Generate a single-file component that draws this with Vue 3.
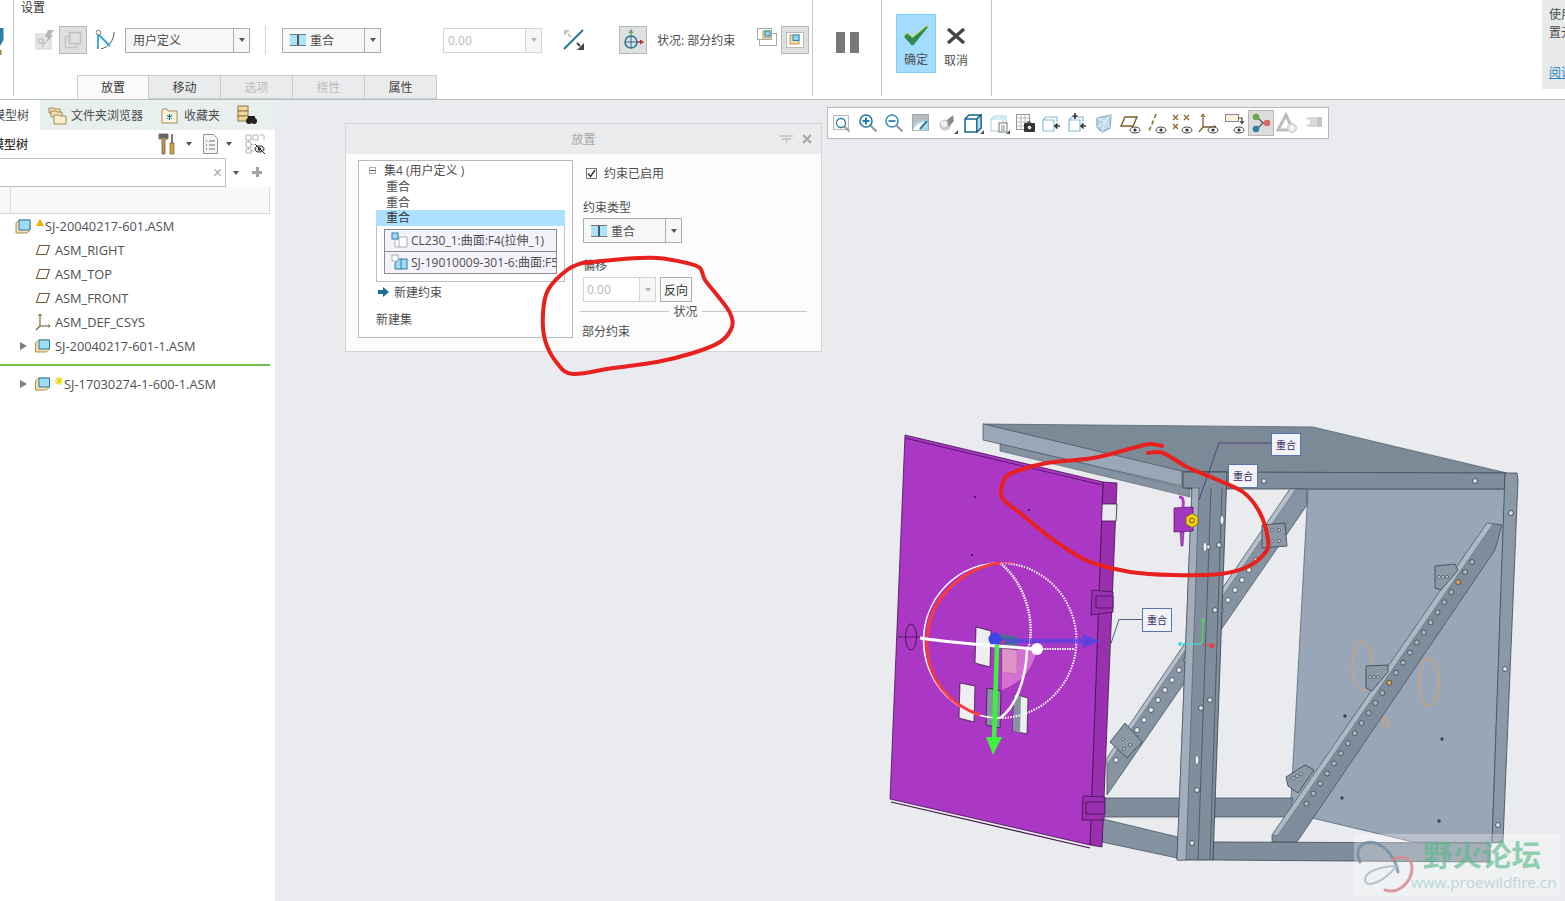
<script setup>
// smooth line through hand-picked points, for the red marker strokes
function smooth(pts) {
  let d = `M${pts[0][0]},${pts[0][1]}`
  for (let i = 0; i < pts.length - 1; i++) {
    const p0 = pts[i - 1] || pts[i]
    const p1 = pts[i]
    const p2 = pts[i + 1]
    const p3 = pts[i + 2] || p2
    const c1 = [p1[0] + (p2[0] - p0[0]) / 6, p1[1] + (p2[1] - p0[1]) / 6]
    const c2 = [p2[0] - (p3[0] - p1[0]) / 6, p2[1] - (p3[1] - p1[1]) / 6]
    d += ` C${c1[0].toFixed(1)},${c1[1].toFixed(1)} ${c2[0].toFixed(1)},${c2[1].toFixed(1)} ${p2[0]},${p2[1]}`
  }
  return d
}

const dialogMark = smooth([
  [585, 263], [623, 259], [657, 258], [687, 263], [700, 268], [705, 280], [717, 295], [730, 313],
  [732, 327], [720, 342], [693, 353], [657, 362], [613, 368], [573, 374], [557, 363], [545, 340],
  [543, 313], [548, 290], [567, 270], [585, 262],
])
const modelMark = smooth([
  [1162, 446], [1150, 444], [1133, 448], [1093, 458], [1047, 463], [1020, 470], [1005, 478], [1002, 497],
  [1020, 513], [1047, 535], [1073, 553], [1093, 563], [1130, 572], [1173, 575], [1220, 574], [1247, 567],
  [1265, 553], [1268, 540], [1260, 513], [1243, 492], [1213, 478], [1187, 467], [1163, 453], [1148, 453],
])

const upperHoles = Array.from({ length: 21 }, (_, i) => ({ x: 1256 - 7 * i, y: 560 + 10 * i }))
const lowerHoles = Array.from({ length: 25 }, (_, i) => ({ x: 1472 - 6.9 * i, y: 562 + 10.07 * i }))
const doorDots = [[975, 497], [1029, 510], [972, 555], [1026, 568]]
const sheetDots = [[1345, 716], [1442, 739], [1342, 798], [1439, 821]]
const frameHoles = [[1511, 513], [1505, 669], [1498, 825], [1264, 481], [1475, 481], [1208, 547], [1201, 708], [1197, 790], [1192, 843], [1219, 545], [1215, 610], [1210, 700]]
const slotHoles = [[1205, 547], [1197, 760], [1222, 520]]
const brackets = [
  'M1435,566 L1455,564 L1458,570 L1441,590 L1435,588 Z',
  'M1366,666 L1388,665 L1388,672 L1372,691 L1366,688 Z',
  'M1286,777 L1305,765 L1314,770 L1298,793 L1288,786 Z',
  'M1262,525 L1285,523 L1287,546 L1262,548 Z',
  'M1110,742 L1125,723 L1142,742 L1127,758 Z',
]
const bracketDots = [
  [1439, 577], [1443, 577], [1447, 577],
  [1370, 677], [1374, 677], [1378, 677],
  [1293, 778], [1297, 776], [1301, 774],
  [1272, 530], [1279, 530], [1279, 541], [1272, 541],
  [1123, 739], [1130, 745], [1124, 749],
]

const tags = [
  { x: 1142, y: 608, w: 29, h: 23 },
  { x: 1271, y: 433, w: 29, h: 22 },
  { x: 1228, y: 464, w: 29, h: 23 },
]

const eye = '<ellipse cx="16" cy="18" rx="5" ry="3" fill="#fff" stroke="#444"/><circle cx="16" cy="18" r="1.6" fill="#333"/>'
const corner = '<path d="M22 22h-4l4-4z" fill="#555"/>'
const viewIcons = [
  '<rect x="2.5" y="3.5" width="15" height="14" fill="#f6f8f8" stroke="#b3bbc0"/><circle cx="10" cy="11" r="4.5" fill="#fff" stroke="#2f7f9f" stroke-width="1.3"/><path d="M13.5 14.5l5 5" stroke="#999" stroke-width="2"/>',
  '<circle cx="9" cy="9" r="6" fill="#fff" stroke="#1f7a9e" stroke-width="1.6"/><path d="M5.5 9h7M9 5.5v7" stroke="#1f7a9e" stroke-width="2"/><path d="M13.5 13.5l6 6" stroke="#999" stroke-width="2.2"/>',
  '<circle cx="9" cy="9" r="6" fill="#fff" stroke="#3f92b2" stroke-width="1.6"/><path d="M5.5 9h7" stroke="#3f92b2" stroke-width="2"/><path d="M13.5 13.5l6 6" stroke="#999" stroke-width="2.2"/>',
  '<rect x="2.5" y="2.5" width="16" height="16" fill="#b9bcbe" stroke="#a3a7aa"/><path d="M3 18.5v-6c4-4 9-5 15-4v10z" fill="#a9d7e8"/><path d="M3 18c3-6 8-8 12-8-3 2-5 5-6 8z" fill="#fff"/><path d="M10 17l7-8" stroke="#1b6f93" stroke-width="1.6"/>',
  '<circle cx="9" cy="13" r="5.5" fill="#c9c9c9"/><circle cx="8" cy="12" r="3" fill="#f1f1f1"/><path d="M11 8l6-5 1 6-5 6z" fill="#8d8d8d"/>' + corner,
  '<path d="M3 7h12v13H3zM3 7l4-4h12v13l-4 4M15 7l4-4" fill="#fff" stroke="#17658a" stroke-width="1.5"/><path d="M15 7l4-4v13l-4 4z" fill="#bfe3f2" stroke="#17658a" stroke-width="1.2"/>' + corner,
  '<path d="M3 7h12v12H3zM3 7l3-3h12v7" fill="#fff" stroke="#9fcfe3"/><path d="M6 4h12v4H6z" fill="#d4edf7"/><rect x="11" y="11" width="8" height="9" fill="#fff" stroke="#777"/><path d="M13 14h4M13 16h4M13 18h4" stroke="#888"/>' + corner,
  '<rect x="2.5" y="2.5" width="13" height="15" fill="#fff" stroke="#999"/><path d="M3 6h12M3 10h12M3 14h12M7 3v14M11 3v14" stroke="#bbb"/><rect x="10" y="11" width="11" height="9" rx="1" fill="#333"/><rect x="13" y="9.5" width="4" height="2" fill="#555"/><circle cx="15.5" cy="15.5" r="2.5" fill="#ddd" stroke="#111"/>',
  '<path d="M3 8h11v11H3zM3 8l3-3h11v5" fill="#fff" stroke="#85bdd6" stroke-width="1.2"/><path d="M20 14h-5M17.5 11.5L15 14l2.5 2.5" fill="none" stroke="#333" stroke-width="1.6"/>',
  '<path d="M3 8h11v11H3zM3 8l3-3h11v5" fill="#fff" stroke="#85bdd6" stroke-width="1.2"/><path d="M20 14h-5M17.5 11.5L15 14l2.5 2.5M9 1v6M6.5 4h5" fill="none" stroke="#333" stroke-width="1.6"/>',
  '<path d="M4 6l14-3-1 13-8 4-5-5z" fill="#bcdbe8" stroke="#86aabb" stroke-width="1.2"/><path d="M4 6l8 3 6-6M12 9l-3 11M4 15l9-6 4 7" fill="none" stroke="#e5f2f7"/>',
  '<path d="M2 14l4-9h12l-4 9z" fill="none" stroke="#7d5c24" stroke-width="1.4"/>' + eye,
  '<path d="M11 2l-1.6 4M8.4 8.5l-1.5 4M5.8 14.5l-1.5 4" stroke="#8a6a2a" stroke-width="1.6"/>' + eye,
  '<path d="M2 3l5 5M7 3l-5 5M13 3l5 5M18 3l-5 5M2 12l5 5M7 12l-5 5" stroke="#8a6a2a" stroke-width="1.3"/>' + eye,
  '<path d="M6 2v13H19M6 15l-4 5" fill="none" stroke="#7d5c24" stroke-width="1.3"/><path d="M4 5l2-3 2 3M17 13l2 2-2 2" fill="none" stroke="#7d5c24"/>' + eye,
  '<rect x="2.5" y="2.5" width="13" height="7" fill="#fbf3d8" stroke="#888"/><path d="M15 6h4v5M17 9l2 2.500 2-2.500" fill="none" stroke="#444" stroke-width="1.2"/>' + eye,
  '<path d="M7 5l6 6-6 6M13 11h4" fill="none" stroke="#555" stroke-width="1.3"/><circle cx="6" cy="5" r="3.300" fill="#6aa84f"/><circle cx="6" cy="17" r="3.300" fill="#2e7fa8"/><circle cx="17" cy="11" r="3.300" fill="#d9666f"/>',
  '<path d="M10 3L2 18h15z" fill="none" stroke="#bcbcbc" stroke-width="3"/><circle cx="16" cy="16" r="4.500" fill="#e4e4e4" stroke="#c8c8c8"/><path d="M14.500 13.500l4 2.500-4 2.500z" fill="#fff"/>',
  '<path d="M3 7l4-2h13v10H7l-4-2z" fill="#d8d8d8"/><path d="M3 7l5 1v4l-5 1z" fill="#fff"/><path d="M15 5h5v10h-5z" fill="#c4c4c4"/>',
]
const pressedView = 16

const treeRows = [
  { label: 'ASM_RIGHT', kind: 'plane' },
  { label: 'ASM_TOP', kind: 'plane' },
  { label: 'ASM_FRONT', kind: 'plane' },
  { label: 'ASM_DEF_CSYS', kind: 'csys' },
]
const ribbonTabs = [
  { label: '放置', active: true },
  { label: '移动' },
  { label: '选项', off: true },
  { label: '挠性', off: true },
  { label: '属性' },
]
</script>

<template>
  <div class="app">
    <!-- ribbon -->
    <header class="ribbon">
      <div class="edge">
        <svg class="edge-icon" width="4" height="28" viewBox="0 0 4 28">
          <path d="M0 0h3.500v12L0 18z" fill="#2c7ea6" />
          <rect y="22" width="1.500" height="5" fill="#a8843d" />
        </svg>
      </div>
      <section class="group settings">
        <div class="group-title">设置</div>
        <div class="tools">
          <svg class="ic-greyed" width="20" height="22" viewBox="0 0 20 22">
            <rect x="1" y="5" width="15" height="15" fill="#e6e6e6" stroke="#cfcfcf" />
            <path d="M4 10h4v4H4zM10 13l-3 5" fill="none" stroke="#c4c4c4" stroke-width="1.500" />
            <path d="M13 1h6l-4 5h3l-7 8 2-6h-3z" fill="#b5b5b5" />
          </svg>
          <button class="press ic-copy">
            <svg width="20" height="20" viewBox="0 0 20 20">
              <rect x="6.500" y="2.500" width="11" height="11" fill="none" stroke="#bdbdbd" stroke-width="1.500" />
              <path d="M6 6.500H2.500v11h11V14" fill="none" stroke="#c4c4c4" stroke-width="1.500" />
            </svg>
          </button>
          <svg class="ic-fit" width="20" height="22" viewBox="0 0 20 22">
            <path d="M19 3c0 8-5 15-13 17" fill="none" stroke="#555" stroke-width="1" />
            <path d="M3 6v14M4 6l11 11" fill="none" stroke="#2ea5d8" stroke-width="1.800" />
            <circle cx="3.500" cy="3.500" r="2.300" fill="#fff" stroke="#8a7a5c" />
          </svg>
          <div class="combo combo-user">
            <span class="combo-text">用户定义</span>
            <span class="combo-btn"><i class="caret"></i></span>
          </div>
          <div class="tool-sep"></div>
          <div class="combo combo-mate">
            <span class="combo-text"><i class="mate-ic"></i>重合</span>
            <span class="combo-btn"><i class="caret"></i></span>
          </div>
          <div class="combo combo-value off">
            <span class="combo-text">0.00</span>
            <span class="combo-btn"><i class="caret"></i></span>
          </div>
          <svg class="ic-flip" width="22" height="22" viewBox="0 0 22 22">
            <path d="M20 1L1 20" stroke="#1f6f93" stroke-width="1.800" />
            <path d="M1 1h6L1 7z" fill="#c4c4c4" />
            <path d="M21 21h-7l7-7z" fill="#444" />
            <path d="M5 5l3 3" stroke="#c4c4c4" stroke-width="2" />
            <path d="M14 14l3 3" stroke="#444" stroke-width="2" />
          </svg>
          <button class="press ic-move">
            <svg width="24" height="24" viewBox="0 0 24 24">
              <circle cx="10" cy="14" r="6" fill="none" stroke="#1f6f93" stroke-width="1.400" />
              <path d="M4 14h12M10 8v12" stroke="#1f6f93" />
              <path d="M10 8V4" stroke="#6b9a5a" stroke-width="1.400" />
              <path d="M7.500 5L10 1l2.500 4z" fill="#6b9a5a" />
              <path d="M16 14h4" stroke="#a33" stroke-width="1.400" />
              <path d="M19 11.500l4 2.500-4 2.500z" fill="#a33" />
            </svg>
          </button>
          <span class="status-text">状况: 部分约束</span>
          <svg class="ic-win" width="20" height="18" viewBox="0 0 20 18">
            <rect x="2.500" y="5.500" width="17" height="12" fill="#fff" stroke="#aaa" />
            <rect x="0.500" y="0.500" width="14" height="11" fill="#fff" stroke="#aaa" />
            <rect x="6" y="3" width="7" height="7" fill="#f2d9a0" stroke="#b79b5e" />
            <rect x="8" y="3" width="5" height="5" fill="#8fd6f5" stroke="#2f8ab3" />
          </svg>
          <button class="press ic-win2">
            <svg width="18" height="16" viewBox="0 0 18 16">
              <rect x="0.500" y="0.500" width="17" height="15" fill="#fff" stroke="#bbb" />
              <rect x="4" y="3" width="9" height="9" fill="#f2d9a0" stroke="#b79b5e" />
              <rect x="7" y="3" width="6" height="5.500" fill="#8fd6f5" stroke="#2f8ab3" />
            </svg>
          </button>
        </div>
        <div class="ribbon-tabs">
          <div
            v-for="tab in ribbonTabs"
            :key="tab.label"
            class="ribbon-tab"
            :class="{ active: tab.active, off: tab.off }"
          >
            {{ tab.label }}
          </div>
        </div>
      </section>
      <section class="group pause">
        <i class="pause-bar"></i>
        <i class="pause-bar"></i>
      </section>
      <section class="group confirm">
        <div class="big-btn ok">
          <svg width="28" height="21" viewBox="0 0 30 24">
            <path d="M1 13l4-4 6 5L27 1l2 1-17 21h-2z" fill="#2f8a57" />
            <path d="M1 13l4-4 6 5L27 1l2 1" fill="none" stroke="#c9d84a" stroke-width="1.200" />
          </svg>
          <span>确定</span>
        </div>
        <div class="big-btn cancel">
          <svg width="20" height="16" viewBox="0 0 20 16">
            <path d="M2 1l16 14M18 1L2 15" stroke="#444" stroke-width="3.400" />
          </svg>
          <span>取消</span>
        </div>
      </section>
      <aside class="help">
        <div class="help-text">使用<br />置元</div>
        <div class="help-link">阅读</div>
      </aside>
    </header>

    <div class="workspace">
      <!-- model tree panel -->
      <aside class="side">
        <div class="side-tabs">
          <div class="side-tab active">模型树</div>
          <div class="side-tab folders">
            <svg width="19" height="19" viewBox="0 0 19 19">
              <path d="M1 7V2h5l1 1h5v4z" fill="#f1dfb6" stroke="#a68b55" />
              <path d="M3 11V5h5l1 1h5v5z" fill="#f1dfb6" stroke="#a68b55" />
              <path d="M6 18V9h5l1 1h6v8z" fill="#fbeecb" stroke="#a68b55" />
            </svg>
            文件夹浏览器
          </div>
          <div class="side-tab favs">
            <svg width="17" height="17" viewBox="0 0 17 17">
              <path d="M1 16V3l1-1h4l1 2h9v12z" fill="#fdf5dd" stroke="#a68b55" />
              <path d="M8.500 7v6M6 8.500l5 3M11 8.500l-5 3" stroke="#0f7096" stroke-width="1.100" />
            </svg>
            收藏夹
          </div>
          <svg class="find-ic" width="20" height="20" viewBox="0 0 20 20">
            <rect x="1" y="1" width="10" height="5" fill="#efd79d" stroke="#94773f" />
            <rect x="1" y="6" width="10" height="5" fill="#efd79d" stroke="#94773f" />
            <rect x="1" y="11" width="10" height="5" fill="#efd79d" stroke="#94773f" />
            <circle cx="12" cy="16" r="3" fill="#222" />
            <circle cx="17" cy="16" r="3" fill="#222" />
            <rect x="11" y="11" width="7" height="4" fill="#222" />
          </svg>
        </div>
        <div class="tree-bar">
          <span class="tree-bar-title">模型树</span>
          <div class="tree-bar-tools">
            <svg class="ic-tools" width="17" height="22" viewBox="0 0 17 22">
              <path d="M1 1h9v5H7v15H4V6H1z" fill="#b99a62" stroke="#6f5a31" stroke-width=".8" />
              <rect x="1" y="1" width="9" height="4" fill="#666" />
              <path d="M13 1h2v9h-2z" fill="#777" />
              <rect x="12" y="10" width="4" height="11" fill="#c9a24a" stroke="#7b6228" stroke-width=".7" />
            </svg>
            <i class="caret dark"></i>
            <svg class="ic-doc" width="15" height="20" viewBox="0 0 15 20">
              <path d="M.5.500h10l4 4v15H.5z" fill="#f4f6f6" stroke="#8b9296" />
              <path d="M6 7h6M6 11h6M6 15h6" stroke="#777" />
              <path d="M3 7h1M3 11h1M3 15h1" stroke="#777" stroke-width="1.500" />
            </svg>
            <i class="caret dark"></i>
            <svg class="ic-filter" width="20" height="20" viewBox="0 0 20 20">
              <path d="M1 1h5v5H1zM8 1h5v5H8zM15 1h4v5M1 8h5v5H1zM1 15h5v4H1zM3.500 6v2M3.500 13v2M6 10.500h3M6 17h3" fill="none" stroke="#b4b4b4" />
              <ellipse cx="14.500" cy="15" rx="4.500" ry="3" fill="#ddd" stroke="#222" />
              <circle cx="14.500" cy="15" r="1.600" fill="#222" />
              <path d="M10 10l10 10" stroke="#222" />
            </svg>
          </div>
        </div>
        <div class="tree-search">
          <div class="search-box"><span class="search-x">×</span></div>
          <i class="caret dark"></i>
          <span class="search-plus"></span>
        </div>
        <div class="tree-head"><span class="head-cell"></span></div>
        <div class="tree">
          <div class="tree-row root">
            <svg class="cube" width="16" height="16" viewBox="0 0 16 16">
              <path d="M1 5l3-3h11v10l-3 3H1z" fill="#f5dfb0" stroke="#a9904f" />
              <path d="M4 2h11v10H4z" fill="#9fdcf4" stroke="#2b7da3" />
            </svg>
            <svg class="warn" width="8" height="7" viewBox="0 0 8 7"><path d="M4 0l4 7H0z" fill="#edb100" /></svg>
            <span>SJ-20040217-601.ASM</span>
          </div>
          <div v-for="row in treeRows" :key="row.label" class="tree-row child">
            <svg v-if="row.kind === 'plane'" width="14" height="10" viewBox="0 0 14 10">
              <path d="M3.500.500h10L10.500 9.500H.500z" fill="none" stroke="#75592b" stroke-width="1.100" />
            </svg>
            <svg v-else width="16" height="18" viewBox="0 0 16 18">
              <path d="M5 1v12M5 13h10M5 13l-4 4" fill="none" stroke="#75592b" stroke-width="1.100" />
              <path d="M3.500 3L5 1l1.500 2M13.500 11.500L15 13l-1.500 1.500" fill="none" stroke="#75592b" />
            </svg>
            <span>{{ row.label }}</span>
          </div>
          <div class="tree-row sub">
            <i class="expand"></i>
            <svg class="cube" width="15" height="14" viewBox="0 0 15 14">
              <path d="M.500 4l3-3h11v9l-3 3H.500z" fill="#f5dfb0" stroke="#a9904f" />
              <path d="M4 1h10.500v9H4z" fill="#9fdcf4" stroke="#2b7da3" />
            </svg>
            <span>SJ-20040217-601-1.ASM</span>
          </div>
          <div class="insert-line"></div>
          <div class="tree-row sub">
            <i class="expand"></i>
            <svg class="cube" width="15" height="14" viewBox="0 0 15 14">
              <path d="M.500 4l3-3h11v9l-3 3H.500z" fill="#f5dfb0" stroke="#a9904f" />
              <path d="M4 1h10.500v9H4z" fill="#9fdcf4" stroke="#2b7da3" />
            </svg>
            <svg class="star" width="8" height="8" viewBox="0 0 8 8">
              <path d="M4 0v8M0 4h8M1 1l6 6M7 1L1 7" stroke="#e8d800" stroke-width="1.200" />
            </svg>
            <span>SJ-17030274-1-600-1.ASM</span>
          </div>
        </div>
      </aside>

      <!-- graphics window -->
      <main class="canvas">
        <svg class="model" width="1290" height="801" viewBox="275 100 1290 801">
          <!-- top plate and rear frame -->
          <path d="M983,424 L1313,427 L1507,473 L1183,472 Z" fill="#7c8a98" stroke="#4e5a66" stroke-width=".7" />
          <path d="M1308,489 L1505,489 L1492,843 L1413,842 L1312,818 L1291,800 Z" fill="#98a6b8" stroke="#4e5a66" stroke-width=".7" />
          <path d="M1183,472 L1505,473 L1505,489 L1183,489 Z" fill="#7f8d9c" stroke="#3f4a55" stroke-width=".8" />
          <path d="M983,424 L1182,471 L1182,486 L983,440 Z" fill="#9aa7b6" stroke="#4e5a66" stroke-width=".8" />
          <path d="M1000,444 L1190,489 L1190,497 L1000,451 Z" fill="#8492a1" stroke="#4e5a66" stroke-width=".6" />
          <path d="M1505,473 L1517,473 L1518,480 L1503,842 L1492,843 Z" fill="#8a98a8" stroke="#3f4a55" stroke-width=".8" />
          <path d="M1213,798 L1293,798 L1290,817 L1213,817 Z" fill="#7f8d9c" stroke="#3f4a55" stroke-width=".7" />
          <path d="M1105,798 L1180,798 L1180,817 L1103,817 Z" fill="#7f8d9c" stroke="#3f4a55" stroke-width=".7" />
          <path d="M1213,842 L1490,843 L1490,862 L1212,860 Z" fill="#7f8d9c" stroke="#3f4a55" stroke-width=".8" />
          <path d="M1103,819 L1178,837 L1177,858 L1102,842 Z" fill="#8592a1" stroke="#3f4a55" stroke-width=".7" />
          <circle v-for="(d, i) in sheetDots" :key="'s' + i" :cx="d[0]" :cy="d[1]" r="1.700" fill="#39434d" />

          <!-- orange edges on the rear sheet -->
          <ellipse cx="1362" cy="666" rx="10" ry="24" fill="none" stroke="#e8a050" stroke-width="1" />
          <ellipse cx="1429" cy="682" rx="10" ry="24" fill="none" stroke="#e8a050" stroke-width="1" />
          <ellipse cx="1386" cy="723" rx="2.500" ry="5.500" fill="none" stroke="#e8a050" stroke-width="1" />

          <!-- diagonal braces -->
          <path d="M1290,489 L1307,489 L1307,505 L1107,795 L1107,758 Z" fill="#8593a2" stroke="#3f4a55" stroke-width=".7" />
          <path d="M1290,489 L1296,489 L1107,765 L1107,758 Z" fill="#b4bfca" stroke="#55616d" stroke-width=".5" />
          <circle v-for="(h, i) in upperHoles" :key="'u' + i" :cx="h.x" :cy="h.y" r="2.500" fill="#e9ebee" stroke="#333c45" stroke-width=".7" />
          <path d="M1487,523 L1502,525 L1495,550 L1297,842 L1272,842 L1272,835 Z" fill="#7e8c9b" stroke="#3f4a55" stroke-width=".7" />
          <path d="M1487,523 L1493,524 L1278,835 L1272,835 Z" fill="#aeb9c5" stroke="#55616d" stroke-width=".5" />
          <circle v-for="(h, i) in lowerHoles" :key="'l' + i" :cx="h.x" :cy="h.y" r="2.500" :fill="i === 2 || i === 12 ? '#e8a050' : '#a9b4bf'" stroke="#333c45" stroke-width=".7" />
          <path v-for="(b, i) in brackets" :key="'b' + i" :d="b" fill="#8b98a6" stroke="#39434d" stroke-width=".8" />
          <circle v-for="(d, i) in bracketDots" :key="'bd' + i" :cx="d[0]" :cy="d[1]" r="1.500" fill="#d4d9de" stroke="#2f3840" stroke-width=".6" />

          <!-- front post -->
          <path d="M1183,472 L1227,472 L1213,860 L1177,860 L1192,488 L1183,488 Z" fill="#7f8d9c" stroke="#333c45" stroke-width=".8" />
          <path d="M1192,488 L1199,488 L1186,860 L1177,860 Z" fill="#a2aebb" stroke="#4b5661" stroke-width=".6" />
          <path d="M1211,488 L1198,860 M1222,488 L1210,860" stroke="#3f4a55" stroke-width=".7" />
          <circle v-for="(h, i) in frameHoles" :key="'f' + i" :cx="h[0]" :cy="h[1]" r="2.400" fill="#e2e6ea" stroke="#333c45" stroke-width=".8" />
          <ellipse v-for="(h, i) in slotHoles" :key="'o' + i" :cx="h[0]" :cy="h[1]" rx="2" ry="4.500" fill="#eef0f2" stroke="#39434d" stroke-width=".6" />

          <!-- small hinge with the yellow nut -->
          <path d="M1183,507 C1184,498 1182,497 1179,497" fill="none" stroke="#b13dd0" stroke-width="3" />
          <path d="M1174,508 L1193,507 L1193,531 L1174,532 Z" fill="#a536c0" stroke="#5c1a70" stroke-width=".8" />
          <path d="M1180,532 h4 l-1,14 h-2 Z" fill="#b13dd0" stroke="#5c1a70" stroke-width=".5" />
          <path d="M1192,513.500 L1198,517 V524 L1192,527.500 L1186,524 V517 Z" fill="#f2d21b" stroke="#6d5d00" stroke-width=".7" />
          <circle cx="1192" cy="520.500" r="2.500" fill="none" stroke="#6d5d00" />

          <!-- door -->
          <path d="M1103,482 L1117,483 L1102,847 L1090,845 Z" fill="#9a30b0" stroke="#43124f" stroke-width=".8" />
          <path d="M1099,504 L1117,504 L1116,521 L1098,521 Z" fill="#e9ebee" stroke="#43124f" stroke-width=".8" />
          <path d="M905,435 L1103,482 L1090,845 L890,799 Z" fill="#ab37c5" stroke="#43124f" stroke-width=".8" />
          <path d="M905,438 L1102,485" stroke="#43124f" stroke-width=".8" />
          <path d="M891,802 L1090,848" stroke="#43124f" stroke-width="1.200" />
          <circle v-for="(d, i) in doorDots" :key="'d' + i" :cx="d[0]" :cy="d[1]" r="1" fill="#2b0a33" />
          <path d="M976,627 L991,631 L990,667 L975,663 Z" fill="#eceef0" stroke="#2b0a33" stroke-width=".7" />
          <path d="M960,683 L975,686 L974,722 L959,718 Z" fill="#eceef0" stroke="#2b0a33" stroke-width=".7" />
          <path d="M987,688 L1001,691 L1000,728 L986,725 Z" fill="#8593a2" stroke="#2b0a33" stroke-width=".7" />
          <path d="M1014,694 L1028,698 L1027,734 L1013,731 Z" fill="#eceef0" stroke="#2b0a33" stroke-width=".7" />
          <path d="M1014,694 L1021,696 L1020,733 L1013,731 Z" fill="#8593a2" />
          <path d="M1002,648 L1017,650 L1017,674 L1002,672 Z" fill="#c79aa7" stroke="#5a3a45" stroke-width=".6" />
          <path d="M1000,634 L1018,637 L1018,646 L1000,644 Z" fill="#4c6f90" />
          <ellipse cx="911" cy="637" rx="5.500" ry="13" fill="none" stroke="#43124f" stroke-width=".9" />
          <path d="M898,637 H920" stroke="#43124f" stroke-width=".8" />
          <g fill="#9a30b0" stroke="#43124f" stroke-width=".8">
            <path d="M1092,590 L1113,592 L1113,612 L1091,615 Z" />
            <path d="M1096,596 h17 v12 h-17 Z" />
            <path d="M1083,796 L1105,797 L1104,820 L1082,820 Z" />
            <path d="M1086,802 h19 v12 h-19 Z" />
          </g>

          <!-- 3D dragger -->
          <path d="M1002,650 H1037 Q1030,680 1002,690 Z" fill="#e98fda" opacity=".65" />
          <path d="M1000,563 A76,77 0 0 1 1000,718" fill="none" stroke="#fff" stroke-width="2" stroke-dasharray="1.500 1.200" />
          <path d="M1000,563 A76,77 0 0 0 1000,718" fill="none" stroke="#fff" stroke-width="1.600" />
          <path d="M1000,563 C1034,590 1034,640 1027,650" fill="none" stroke="#fff" stroke-width="2.500" stroke-dasharray="1.500 1" />
          <path d="M1027,650 C1026,680 1015,708 1000,718" fill="none" stroke="#fff" stroke-width="2.500" />
          <path d="M1000,563 C975,565 927,590 927,643 C927,680 950,705 980,715" fill="none" stroke="#f53b3b" stroke-width="3" />
          <path d="M1000,563 H1015" stroke="#f44a4a" stroke-width="1.500" stroke-dasharray="1.500 1" />
          <path d="M1000,641 H1085" stroke="#4a45e6" stroke-width="4.500" stroke-dasharray="1.500 .8" />
          <path d="M1083,634 L1100,641 L1083,648 Z" fill="#4a45e6" opacity=".8" />
          <circle cx="995" cy="639" r="6.500" fill="#3f45ea" />
          <path d="M920,638 C960,644 1000,646 1037,649" fill="none" stroke="#fff" stroke-width="3" />
          <path d="M1037,649 H1075" stroke="#fff" stroke-width="2" stroke-dasharray="1.500 1" />
          <circle cx="1037" cy="649" r="6" fill="#fff" />
          <path d="M997,645 L994,740" stroke="#3ef13e" stroke-width="4.500" />
          <path d="M986,737 L1002,737 L993,755 Z" fill="#3ef13e" />
          <circle cx="1003" cy="642" r="1.500" fill="#f33" />

          <!-- component csys -->
          <path d="M1202,644 L1203,620" stroke="#4ddd58" stroke-width="1.200" />
          <circle cx="1203" cy="620" r="1.800" fill="#4ddd58" />
          <path d="M1202,644 H1180" stroke="#3cdde0" stroke-width="1.200" />
          <circle cx="1180" cy="644" r="2" fill="#3cdde0" />
          <path d="M1202,644 L1212,646" stroke="#ee3b3b" stroke-width="1.200" />
          <circle cx="1212" cy="646" r="2.400" fill="#ee3b3b" />

          <!-- constraint tags -->
          <path d="M1142,619.500 H1119 L1107,655" fill="none" stroke="#5b5f7d" />
          <path d="M1271,443 H1219 L1199,500" fill="none" stroke="#4b2f7a" stroke-width=".8" />
          <g v-for="(t, i) in tags" :key="'t' + i">
            <rect :x="t.x + .5" :y="t.y + .5" :width="t.w" :height="t.h" fill="#f2f3f7" stroke="#5576ad" />
            <text class="tag-text" :x="t.x + 15" :y="t.y + 16" text-anchor="middle">重合</text>
          </g>

          <path :d="modelMark" fill="none" stroke="#e8201e" stroke-width="4" stroke-linecap="round" />
        </svg>

        <!-- view toolbar -->
        <div class="view-bar">
          <button
            v-for="(ic, i) in viewIcons"
            :key="i"
            class="view-btn"
            :class="{ pressed: i === pressedView }"
          >
            <svg width="22" height="22" viewBox="0 0 22 22" v-html="ic"></svg>
          </button>
        </div>

        <!-- placement panel -->
        <section class="dialog">
          <div class="dialog-head">
            <span class="dialog-title">放置</span>
            <svg class="pin" width="13" height="10" viewBox="0 0 13 10">
              <path d="M0 1h13v2H0zM2 4h9v2H2z" fill="#c9c9c9" />
              <path d="M6.500 6v4" stroke="#c9c9c9" />
            </svg>
            <svg class="close" width="10" height="10" viewBox="0 0 10 10">
              <path d="M1 1l8 8M9 1L1 9" stroke="#a9a9a9" stroke-width="2.200" />
            </svg>
          </div>
          <div class="dialog-body">
            <div class="sets">
              <div class="set-root"><i class="minus"></i>集4 (用户定义 )</div>
              <div class="set-item">重合</div>
              <div class="set-item">重合</div>
              <div class="set-item selected">重合</div>
              <div class="refs">
                <div class="ref">
                  <svg width="17" height="17" viewBox="0 0 17 17">
                    <path d="M4 15V9l4-4h8v10H4zM8 5v10" fill="#fff" stroke="#aaa" />
                    <rect x="1" y="1" width="6" height="6" fill="#9fdcf4" stroke="#2b7da3" />
                  </svg>
                  <span>CL230_1:曲面:F4(拉伸_1)</span>
                </div>
                <div class="ref">
                  <svg width="17" height="17" viewBox="0 0 17 17">
                    <path d="M4 15V9l4-4h8v10H4z" fill="#9fdcf4" stroke="#2b7da3" />
                    <path d="M10 5v10" stroke="#2b7da3" />
                    <rect x="1" y="1" width="6" height="6" fill="#fff" stroke="#aaa" />
                  </svg>
                  <span>SJ-19010009-301-6:曲面:F5</span>
                </div>
              </div>
              <div class="set-new">
                <svg width="11" height="10" viewBox="0 0 11 10"><path d="M0 3h5V0l6 5-6 5V7H0z" fill="#1b6f93" /></svg>
                新建约束
              </div>
              <div class="set-add">新建集</div>
            </div>
            <div class="props">
              <label class="check"><i class="check-box">
                <svg width="9" height="9" viewBox="0 0 9 9"><path d="M1 4.500l2.500 3L8 1" fill="none" stroke="#333" stroke-width="1.400" /></svg>
              </i>约束已启用</label>
              <div class="prop-label type-label">约束类型</div>
              <div class="combo combo-type">
                <span class="combo-text"><i class="mate-ic"></i>重合</span>
                <span class="combo-btn"><i class="caret"></i></span>
              </div>
              <div class="prop-label offset-label">偏移</div>
              <div class="offset-row">
                <div class="combo combo-offset off">
                  <span class="combo-text">0.00</span>
                  <span class="combo-btn"><i class="caret"></i></span>
                </div>
                <button class="reverse">反向</button>
              </div>
              <div class="status-rule"><span>状况</span></div>
              <div class="status-value">部分约束</div>
            </div>
          </div>
        </section>

        <svg class="marks" width="1290" height="801" viewBox="275 100 1290 801">
          <path :d="dialogMark" fill="none" stroke="#e8201e" stroke-width="4" stroke-linecap="round" />
          <!-- forum watermark -->
          <rect x="1354" y="834" width="206" height="62" fill="#fff" opacity=".3" />
          <g fill="none" stroke-linecap="round">
            <path d="M1360,862 C1352,845 1368,838 1380,845 C1392,852 1397,865 1398,872" stroke="#6f8ea6" stroke-width="3" opacity=".8" />
            <path d="M1398,866 C1385,866 1365,870 1365,880 C1366,890 1385,880 1395,868" stroke="#aebcc6" stroke-width="2" opacity=".85" />
            <path d="M1385,890 C1400,895 1412,880 1412,868 C1412,856 1400,855 1392,860" stroke="#d98a90" stroke-width="3" opacity=".85" />
          </g>
          <text class="wm-title" x="1423" y="866">野火论坛</text>
          <text class="wm-url" x="1411" y="888">www.proewildfire.cn</text>
        </svg>
      </main>
    </div>
  </div>
</template>

<style scoped>
.app {
  width: 1565px;
  height: 901px;
  display: flex;
  flex-direction: column;
  overflow: hidden;
  background: #e9ebee;
  color: #4d4d4d;
  font-family: "Open Sans", "Noto Sans CJK SC", sans-serif;
  font-size: 12px;
}

button {
  font: inherit;
  color: inherit;
  padding: 0;
}

/* ribbon */
.ribbon {
  flex: 0 0 100px;
  box-sizing: border-box;
  display: flex;
  background: #fff;
  border-bottom: 1px solid #b9bfbf;
}
.edge {
  width: 13px;
  height: 96px;
  border-right: 1px solid #c2c6c6;
}
.edge-icon {
  display: block;
  margin-top: 28px;
}
.group {
  height: 96px;
  box-sizing: border-box;
  border-right: 1px solid #c2c6c6;
}
.settings {
  width: 799px;
  display: flex;
  flex-direction: column;
}
.group-title {
  height: 14px;
  line-height: 14px;
  padding-left: 7px;
  margin-top: 1px;
  color: #333;
}
.tools {
  display: flex;
  align-items: center;
  height: 28px;
  margin-top: 11px;
  padding-left: 21px;
}
.press {
  width: 28px;
  height: 28px;
  box-sizing: border-box;
  display: flex;
  align-items: center;
  justify-content: center;
  background: #dedfe0;
  border: 1px solid #b8b8b8;
  flex: none;
}
.ic-copy { margin-left: 4px; }
.ic-fit { margin-left: 8px; }
.ic-flip { margin-left: 21px; }
.ic-move { margin-left: 34px; }
.ic-win { margin-left: 21px; margin-top: -6px; }
.ic-win2 { margin-left: 4px; }
.status-text {
  margin-left: 10px;
  width: 79px;
  white-space: nowrap;
}
.tool-sep {
  width: 1px;
  height: 28px;
  margin: 0 16px 0 15px;
  background: #d4d6d6;
}
.combo {
  display: flex;
  height: 25px;
  box-sizing: border-box;
  background: #f7f7f7;
  border: 1px solid #aeaeae;
  flex: none;
}
.combo-text {
  flex: 1;
  display: flex;
  align-items: center;
  padding-left: 7px;
  white-space: nowrap;
}
.combo-btn {
  width: 15px;
  display: flex;
  align-items: center;
  justify-content: center;
  border-left: 1px solid #aeaeae;
}
.combo.off {
  background: #fff;
  border-color: #d5d5d5;
  color: #b9b9b9;
}
.combo.off .combo-btn {
  background: #f6f6f6;
  border-left-color: #d5d5d5;
}
.combo.off .caret {
  border-top-color: #b5b5b5;
}
.combo-user { width: 125px; margin-left: 10px; }
.combo-mate { width: 99px; }
.combo-value { width: 99px; margin-left: 62px; }
.combo-value .combo-text { padding-left: 4px; }
.caret {
  display: inline-block;
  width: 0;
  height: 0;
  border-left: 3.500px solid transparent;
  border-right: 3.500px solid transparent;
  border-top: 4px solid #555;
}
.mate-ic {
  width: 16px;
  height: 12px;
  margin-right: 4px;
  box-sizing: border-box;
  background: linear-gradient(90deg, #a9e2fb 0 46%, #555 46% 54%, #a9e2fb 54%);
  border-top: 1px solid #777;
  border-bottom: 1px solid #777;
}
.ribbon-tabs {
  display: flex;
  margin: auto 0 -3px 63px;
}
.ribbon-tab {
  width: 72px;
  height: 24px;
  box-sizing: border-box;
  display: flex;
  align-items: center;
  justify-content: center;
  background: #e9ebec;
  border: 1px solid #c8cccc;
  border-left-width: 0;
  color: #444;
}
.ribbon-tab:first-child {
  border-left-width: 1px;
}
.ribbon-tab.active {
  background: #fafafa;
  color: #333;
  border-bottom-color: #fafafa;
}
.ribbon-tab.off {
  color: #bcbcbc;
}
.pause {
  width: 69px;
  display: flex;
  gap: 5px;
  padding: 32px 0 0 23px;
}
.pause-bar {
  width: 9px;
  height: 21px;
  background: #787878;
}
.confirm {
  width: 110px;
  display: flex;
  gap: 0;
  padding: 14px 0 0 14px;
}
.big-btn {
  width: 40px;
  height: 59px;
  box-sizing: border-box;
  display: flex;
  flex-direction: column;
  align-items: center;
  justify-content: space-between;
  padding: 10px 0 4px;
}
.big-btn.cancel {
  padding-top: 14px;
}
.big-btn.ok {
  background: #a2dcff;
  border: 1px solid #7fcfff;
}
.help {
  margin-left: auto;
  width: 23px;
  height: 89px;
  background: #e8eaea;
  overflow: hidden;
  padding-left: 7px;
  box-sizing: border-box;
  white-space: nowrap;
  line-height: 18px;
}
.help-text {
  margin-top: 6px;
}
.help-link {
  margin-top: 22px;
  color: #2a85c4;
  text-decoration: underline;
}

/* model tree */
.workspace {
  flex: 1;
  display: flex;
  min-height: 0;
}
.side {
  flex: 0 0 275px;
  background: #fff;
  overflow: hidden;
}
.side-tabs {
  height: 30px;
  display: flex;
  align-items: center;
  background: #e8efef;
}
.side-tab {
  display: flex;
  align-items: center;
  height: 30px;
  white-space: nowrap;
  gap: 4px;
}
.side-tab.active {
  width: 40px;
  box-sizing: border-box;
  margin-left: 0;
  background: #fff;
  text-indent: -7px;
  flex: none;
}
.folders { margin-left: 8px; }
.favs { margin-left: 18px; gap: 6px; }
.find-ic { margin-left: 17px; }
.tree-bar {
  height: 28px;
  display: flex;
  align-items: center;
  white-space: nowrap;
}
.tree-bar-title {
  text-indent: -8px;
  font-weight: 500;
  color: #333;
}
.tree-bar-tools {
  margin-left: auto;
  display: flex;
  align-items: center;
  padding-right: 10px;
}
.ic-tools { margin-right: 11px; }
.ic-doc { margin: 0 8px 0 11px; }
.ic-filter { margin-left: 13px; }
.tree-search {
  height: 29px;
  display: flex;
  align-items: center;
}
.search-box {
  width: 226px;
  height: 29px;
  box-sizing: border-box;
  background: #fff;
  border: 1px solid #b9c0c0;
  border-left: 0;
  display: flex;
  align-items: center;
  justify-content: flex-end;
  padding-right: 3px;
  flex: none;
}
.search-x {
  color: #aaa;
  font-size: 16px;
  font-family: "Liberation Sans", sans-serif;
}
.tree-search .caret {
  margin-left: 7px;
}
.search-plus {
  width: 10px;
  height: 10px;
  margin-left: 13px;
  margin-top: -1px;
  background:
    linear-gradient(#a3a3a3, #a3a3a3) center / 10px 3px no-repeat,
    linear-gradient(#a3a3a3, #a3a3a3) center / 3px 10px no-repeat;
}
.tree-head {
  width: 270px;
  height: 27px;
  margin-top: 0;
  box-sizing: border-box;
  background: #f9f9f9;
  border-right: 1px solid #d9d9d9;
  border-bottom: 1px solid #d9d9d9;
  display: flex;
}
.head-cell {
  width: 10px;
  border-right: 1px solid #d9d9d9;
}
.tree-row {
  height: 24px;
  display: flex;
  align-items: center;
  white-space: nowrap;
  color: #505050;
  font-size: 12.800px;
}
.tree-row.root {
  padding-left: 15px;
}
.warn {
  margin: -7px 1px 0 5px;
}
.tree-row.child {
  padding-left: 35px;
}
.tree-row.child svg {
  width: 16px;
  margin-right: 4px;
}
.tree-row.sub {
  padding-left: 20px;
}
.expand {
  width: 0;
  height: 0;
  margin-right: 8px;
  border-top: 4.500px solid transparent;
  border-bottom: 4.500px solid transparent;
  border-left: 7px solid #808080;
}
.tree-row.sub .cube {
  margin-right: 5px;
}
.star {
  margin: -7px 1px 0 0;
}
.insert-line {
  width: 270px;
  height: 2px;
  margin: 6px 0 6px;
  background: #6cbf4b;
}

/* graphics area */
.canvas {
  flex: 1;
  position: relative;
  overflow: hidden;
  background: #e9ebee;
}
.model,
.marks {
  position: absolute;
  left: 0;
  top: 0;
}
.marks {
  pointer-events: none;
}
.tag-text {
  font-family: "Noto Sans CJK SC", sans-serif;
  font-size: 10px;
  fill: #3b2a66;
}
.wm-title {
  font-family: "Noto Sans CJK SC", sans-serif;
  font-size: 29.500px;
  font-weight: 700;
  fill: #58b98a;
  opacity: .62;
}
.wm-url {
  font-family: "Open Sans", sans-serif;
  font-size: 15.200px;
  fill: #a9cfd0;
  opacity: .75;
}
.view-bar {
  position: absolute;
  left: 552px;
  top: 7px;
  width: 502px;
  height: 32px;
  box-sizing: border-box;
  display: flex;
  align-items: center;
  padding-left: 1px;
  background: #fff;
  border: 1px solid #b4bcbc;
}
.view-btn {
  width: 26.170px;
  height: 26px;
  box-sizing: border-box;
  display: flex;
  align-items: center;
  justify-content: center;
  background: none;
  border: 1px solid transparent;
  flex: none;
}
.view-btn.pressed {
  background: #dcdcdc;
  border-color: #b8b8b8;
}

/* placement dialog */
.dialog {
  position: absolute;
  left: 70px;
  top: 23px;
  width: 477px;
  height: 229px;
  box-sizing: border-box;
  background: #fcfcfc;
  border: 1px solid #d2d5d5;
}
.dialog-head {
  height: 30px;
  display: flex;
  align-items: center;
  justify-content: flex-end;
  position: relative;
  background: #e9ebec;
  padding-right: 9px;
  gap: 9px;
}
.dialog-title {
  position: absolute;
  left: 0;
  right: 0;
  text-align: center;
  color: #a6a6a6;
}
.dialog-body {
  display: flex;
  padding: 6px 0 0 12px;
}
.sets {
  width: 215px;
  height: 178px;
  box-sizing: border-box;
  background: #fff;
  border: 1px solid #b4bcbc;
  padding-left: 17px;
  white-space: nowrap;
}
.set-root {
  display: flex;
  align-items: center;
  height: 18px;
  margin: 0 0 0 -7px;
}
.minus {
  width: 7px;
  height: 7px;
  margin-right: 8px;
  box-sizing: border-box;
  background: linear-gradient(#555, #555) center / 5px 1px no-repeat, #fff;
  border: 1px solid #aaa;
}
.set-item {
  height: 15.500px;
  line-height: 15.500px;
  padding-left: 10px;
  width: 189px;
  box-sizing: border-box;
}
.set-item.selected {
  background: #ade1ff;
  color: #333;
}
.refs {
  width: 189px;
  height: 56.500px;
  box-sizing: border-box;
  border: 1px solid #c0c0c0;
  border-top: 0;
  padding: 3px 7px 0;
}
.ref {
  height: 23px;
  box-sizing: border-box;
  display: flex;
  align-items: center;
  gap: 3px;
  padding-left: 6px;
  background: #f6f2fc;
  border: 1px solid #8c8c8c;
  overflow: hidden;
}
.ref svg {
  flex: none;
}
.ref + .ref {
  margin-top: -1px;
}
.set-new {
  display: flex;
  align-items: center;
  gap: 5px;
  height: 20px;
  margin: 0 0 0 2px;
}
.set-add {
  margin-top: 8px;
  height: 20px;
  line-height: 20px;
}
.props {
  width: 226px;
  margin-left: 8px;
  display: flex;
  flex-direction: column;
  white-space: nowrap;
}
.check {
  display: flex;
  align-items: center;
  margin: 3px 0 0 5px;
  height: 20px;
}
.check-box {
  width: 11px;
  height: 11px;
  box-sizing: border-box;
  margin-right: 7px;
  display: flex;
  align-items: center;
  justify-content: center;
  background: #fff;
  border: 1px solid #777;
}
.prop-label {
  margin-left: 2px;
  height: 18px;
  line-height: 18px;
}
.type-label {
  margin-top: 16px;
}
.combo-type {
  width: 99px;
  margin: 1px 0 0 2px;
  background: #f7f7f7;
}
.offset-label {
  margin-top: 14px;
}
.offset-row {
  display: flex;
  gap: 4px;
  margin: 2px 0 0 2px;
}
.combo-offset {
  width: 73px;
}
.combo-offset .combo-text {
  padding-left: 3px;
}
.reverse {
  width: 32px;
  height: 25px;
  box-sizing: border-box;
  background: #f9f9f9;
  border: 1px solid #aeaeae;
  color: #333;
  font-size: 12px;
}
.status-rule {
  height: 1px;
  margin: 9px 0 0 -1px;
  background: #c4c7c7;
  display: flex;
  align-items: center;
  justify-content: center;
}
.status-rule span {
  background: #fcfcfc;
  padding: 0 4px;
  line-height: 14px;
  margin-left: -16px;
}
.status-value {
  margin: 10px 0 0 1px;
}
</style>

<style>
html,
body {
  margin: 0;
  overflow: hidden;
}
</style>
